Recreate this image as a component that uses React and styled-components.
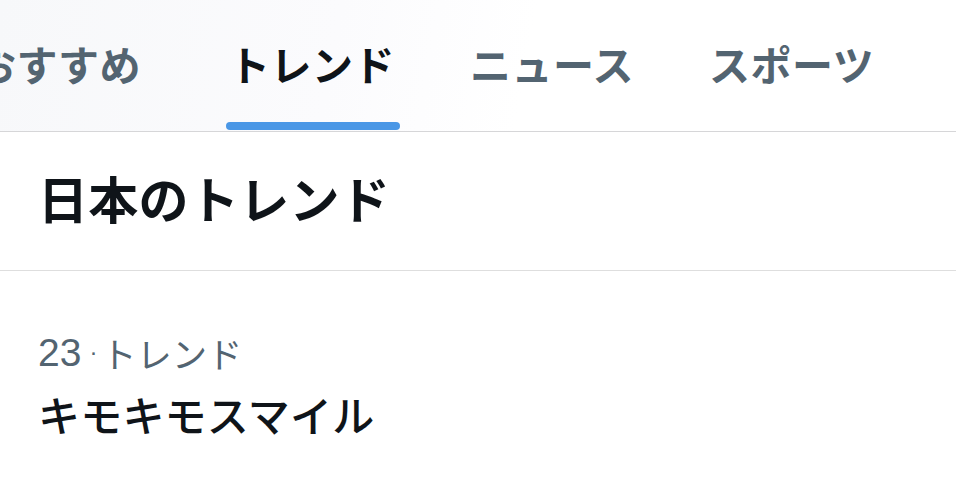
import styled, { createGlobalStyle } from 'styled-components';

const GlobalStyle = createGlobalStyle`
  html, body {
    margin: 0;
    padding: 0;
    background: #ffffff;
  }
  body {
    font-family: "Noto Sans CJK JP", "Noto Sans", sans-serif;
    overflow: hidden;
  }
`;

const Page = styled.div`
  width: 956px;
  height: 482px;
  overflow: hidden;
  background: #ffffff;
`;

const TabBar = styled.nav`
  display: flex;
  align-items: stretch;
  height: 131px;
  border-bottom: 1px solid #d6d6d8;
  background: linear-gradient(100deg, #f7f8fa 0%, #fbfbfd 35%, #ffffff 55%);
  overflow: hidden;
`;

const TabList = styled.div`
  display: flex;
  align-items: stretch;
  margin-left: -25px;
  gap: 75px;
`;

const Tab = styled.div`
  position: relative;
  display: flex;
  align-items: center;
  font-size: 41px;
  font-weight: 700;
  letter-spacing: 0.5px;
  color: ${(p) => (p.$active ? '#0f1419' : '#536471')};
  padding-bottom: 5px;
  white-space: nowrap;

  &:first-child {
    margin-right: 13px;
  }

  &::after {
    content: '';
    display: ${(p) => (p.$active ? 'block' : 'none')};
    position: absolute;
    left: -3px;
    right: -5px;
    bottom: 1px;
    height: 8px;
    border-radius: 4px;
    background: #4a97e6;
  }
`;

const Section = styled.section`
  padding: 0 0 0 38px;
  border-bottom: ${(p) => (p.$divider ? '1px solid #dedede' : 'none')};
`;

const Heading = styled.h2`
  margin: 0;
  height: 138px;
  padding-bottom: 8px;
  box-sizing: border-box;
  display: flex;
  align-items: center;
  font-size: 50px;
  font-weight: 700;
  color: #0f1419;
  letter-spacing: 0.3px;
`;

const TrendItem = styled.div`
  display: flex;
  flex-direction: column;
  padding-top: 60px;
`;

const Meta = styled.div`
  font-family: "Liberation Sans", "Noto Sans CJK JP", sans-serif;
  font-size: 39px;
  color: #536471;
  line-height: 44px;
  display: flex;
  align-items: center;
`;

const Dot = styled.span`
  position: relative;
  top: -1px;
  margin: 0 4px 0 8px;
  font-size: 24px;
`;

const Kana = styled.span`
  font-family: "Noto Sans CJK JP", sans-serif;
  font-size: 35px;
  letter-spacing: 0.3px;
`;

const TrendName = styled.div`
  margin-top: 14px;
  font-size: 42px;
  font-weight: 500;
  color: #0f1419;
  line-height: 50px;
  letter-spacing: 0.2px;
`;

const tabs = ['おすすめ', 'トレンド', 'ニュース', 'スポーツ'];

export default function App() {
  return (
    <Page>
      <GlobalStyle />
      <TabBar>
        <TabList>
          {tabs.map((t) => (
            <Tab key={t} $active={t === 'トレンド'}>
              {t}
            </Tab>
          ))}
        </TabList>
      </TabBar>
      <Section $divider>
        <Heading>日本のトレンド</Heading>
      </Section>
      <Section>
        <TrendItem>
          <Meta>
            23<Dot>·</Dot>
            <Kana>トレンド</Kana>
          </Meta>
          <TrendName>キモキモスマイル</TrendName>
        </TrendItem>
      </Section>
    </Page>
  );
}
